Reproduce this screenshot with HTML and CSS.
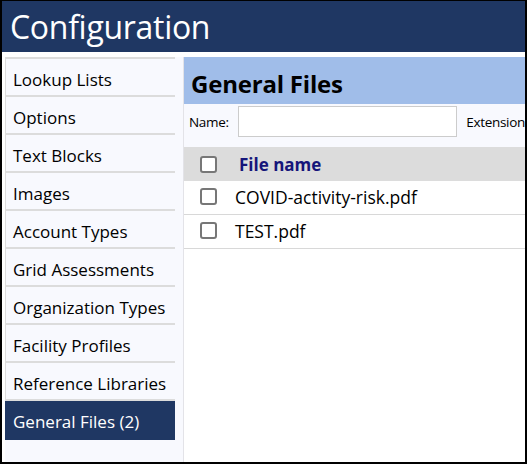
FILE: index.html
```html
<!doctype html>
<html lang="en">
	<head>
		<meta charset="UTF-8" />
		<meta name="viewport" content="width=device-width, initial-scale=1.0" />
		<title>Configuration</title>
		<link rel="stylesheet" href="styles.css">
	</head>
	<body>
		<div class="window">
			<header class="app-header">
				<h1>Configuration</h1>
			</header>

			<div class="app-body">
				<aside class="sidebar">
					<ul class="menu">
						<li><a href="#">Lookup Lists</a></li>
						<li><a href="#">Options</a></li>
						<li><a href="#">Text Blocks</a></li>
						<li><a href="#">Images</a></li>
						<li><a href="#">Account Types</a></li>
						<li><a href="#">Grid Assessments</a></li>
						<li><a href="#">Organization Types</a></li>
						<li><a href="#">Facility Profiles</a></li>
						<li><a href="#">Reference Libraries</a></li>
						<li class="active"><a href="#">General Files (2)</a></li>
					</ul>
				</aside>

				<main class="content">
					<div class="content-title">
						<h2>General Files</h2>
					</div>

					<div class="filters">
						<label>Name:</label>
						<input type="text" class="filter-input" />
						<label class="filter-ext">Extension</label>
					</div>

					<table class="files">
						<thead>
							<tr>
								<th class="col-check"><span class="checkbox"></span></th>
								<th>File name</th>
							</tr>
						</thead>
						<tbody>
							<tr>
								<td class="col-check"><span class="checkbox"></span></td>
								<td>COVID-activity-risk.pdf</td>
							</tr>
							<tr>
								<td class="col-check"><span class="checkbox"></span></td>
								<td>TEST.pdf</td>
							</tr>
						</tbody>
					</table>
				</main>
			</div>
		</div>
	</body>
</html>
```

FILE: styles.css
```css
html,
body,
h1,
h2,
ul {
	margin: 0;
	padding: 0;
}

html {
	background: #000;
}

body {
	font-family: "Open Sans", "Noto Sans", sans-serif;
	height: 464px;
	overflow: hidden;
}

.window {
	margin: 1px 2px 0 2px;
	height: 461px;
	background: #fff;
	display: flex;
	flex-direction: column;
}

.app-header {
	background: #1f3763;
	height: 51px;
	padding-left: 8px;
	display: flex;
	align-items: center;
}

.app-header h1 {
	color: #fff;
	font-weight: 400;
	font-size: 32px;
	letter-spacing: -0.3px;
}

.app-body {
	flex: 1;
	display: flex;
	padding: 5px 0 0 3px;
	min-height: 0;
}

/* left navigation */
.sidebar {
	width: 178px;
	background: #f8f9fe;
	border-right: 1px solid #e3e3e8;
}

.menu {
	list-style: none;
	width: 169px;
	border-left: 1px solid #dcdcdc;
	border-top: 2px solid #dcdcdc;
}

.menu li {
	border-bottom: 2px solid #dcdcdc;
}

.menu a {
	display: block;
	height: 33px;
	padding-top: 3px;
	line-height: 36px;
	padding-left: 7px;
	font-size: 17px;
	color: #000;
	text-decoration: none;
	white-space: nowrap;
}

.menu li.active {
	background: #1f3763;
	border-bottom: none;
	margin-left: -1px;
}

.menu li.active a {
	color: #fff;
	height: 36px;
	padding-left: 8px;
}

/* right side */
.content {
	flex: 1;
	min-width: 0;
	overflow: hidden;
}

.content-title {
	background: #a0bde9;
	height: 47px;
	padding-left: 7px;
	display: flex;
	align-items: center;
}

.content-title h2 {
	font-size: 24px;
	font-weight: 700;
	color: #000;
	padding-top: 6px;
	letter-spacing: -0.2px;
}

.filters {
	background: #f8f9fe;
	height: 43px;
	display: flex;
	align-items: flex-start;
	padding: 2px 0 0 5px;
	box-sizing: border-box;
	font-size: 13.5px;
	white-space: nowrap;
}

.filters label {
	padding-top: 7px;
	letter-spacing: -0.3px;
}

.filter-input {
	width: 218px;
	height: 29px;
	margin: 0 9px 0 9px;
	border: 1px solid #ccc;
	background: #fff;
	padding: 0;
}

.files {
	width: 100%;
	border-collapse: collapse;
	font-size: 17.5px;
}

.files th {
	background: #dcdcdc;
	height: 34px;
	text-align: left;
	color: #15157a;
	font-size: 17px;
	padding: 0 0 0 4px;
	vertical-align: middle;
}

.files td {
	height: 31px;
	border-bottom: 1px solid #d8d8d8;
	padding: 0 0 2px 0;
	vertical-align: middle;
	white-space: nowrap;
}

.col-check {
	width: 51px;
	padding-left: 16px !important;
	box-sizing: border-box;
}

.checkbox {
	display: block;
	width: 13px;
	height: 13px;
	border: 2px solid #777;
	border-radius: 3px;
	background: #fff;
}
```
